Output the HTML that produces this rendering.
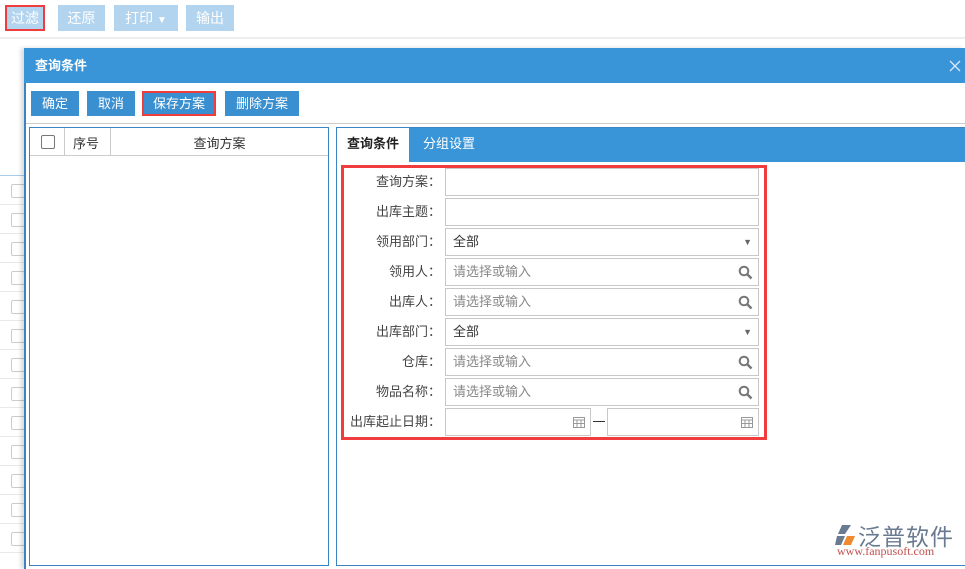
<!DOCTYPE html>
<html style="overflow:hidden;width:965px;height:569px"><head><meta charset="utf-8"><style>
*{box-sizing:border-box;margin:0;padding:0}
body{width:965px;height:569px;overflow:hidden;background:#fff;font-family:"Liberation Sans","Noto Sans CJK SC",sans-serif;font-size:13px;position:relative;color:#333}
.a{position:absolute}
.tb{position:absolute;top:5px;height:26px;background:#b3d4ee;color:#fff;font-size:14px;line-height:26px;text-align:center}
.bb{position:absolute;top:91px;height:25px;background:#3a8fd0;color:#fff;font-size:13px;line-height:25px;text-align:center}
.lab{position:absolute;left:336px;width:105px;text-align:right;color:#444;font-size:13px;height:28px;line-height:28px;white-space:nowrap}
.inp{position:absolute;left:445px;width:314px;height:28px;border:1px solid #c8c8c8;background:#fff;line-height:26px;padding-left:7px;font-size:13px;color:#333}
.ph{color:#888}
.ic{position:absolute;right:5px;top:6px}
</style></head><body>
<div class="tb" style="left:5px;width:40px;border:2px solid #f03c3c;line-height:22px">过滤</div>
<div class="tb" style="left:58px;width:47px">还原</div>
<div class="tb" style="left:114px;width:64px">打印 <span style="font-size:10px">▼</span></div>
<div class="tb" style="left:186px;width:48px">输出</div>
<div class="a" style="left:0;top:37px;width:965px;height:2px;background:#eee"></div>
<div class="a" style="left:0;top:175px;width:24px;height:1px;background:#a9cfee"></div>
<div id="bgrows"></div>
<script>
var s='';for(var i=0;i<13;i++){var y=184+i*29;s+='<div class="a" style="left:11px;top:'+y+'px;width:14px;height:14px;border:1px solid #ccc;border-radius:2px;background:#fff"></div><div class="a" style="left:0;top:'+(y+20)+'px;width:24px;height:1px;background:#e8e8e8"></div>';}
document.getElementById('bgrows').innerHTML=s;
</script>
<div class="a" style="left:24px;top:48px;width:941px;height:521px;background:#fff;border-left:2px solid #3a84c4;box-shadow:-3px 0 4px rgba(0,0,0,.15)"></div>
<div class="a" style="left:24px;top:48px;width:941px;height:35px;background:#3a95d8;color:#fff;font-weight:bold;font-size:13px;line-height:35px;padding-left:11px">查询条件</div>
<svg class="a" style="left:949px;top:60px" width="12" height="12" viewBox="0 0 12 12"><path d="M1 1l10 10M11 1L1 11" stroke="#dbe9f6" stroke-width="1.3"/></svg>
<div class="bb" style="left:31px;width:48px">确定</div>
<div class="bb" style="left:87px;width:48px">取消</div>
<div class="bb" style="left:142px;width:74px;border:2px solid #f03c3c;line-height:21px">保存方案</div>
<div class="bb" style="left:225px;width:74px">删除方案</div>
<div class="a" style="left:26px;top:123px;width:939px;height:1px;background:#ccc"></div>
<div class="a" style="left:29px;top:127px;width:300px;height:439px;border:1px solid #3a84c4"></div>
<div class="a" style="left:30px;top:128px;width:298px;height:28px;border-bottom:1px solid #ccc"></div>
<div class="a" style="left:41px;top:135px;width:14px;height:14px;border:1px solid #777;border-radius:2px"></div>
<div class="a" style="left:64px;top:128px;width:1px;height:28px;background:#ccc"></div>
<div class="a" style="left:110px;top:128px;width:1px;height:28px;background:#ccc"></div>
<div class="a" style="left:73px;top:133px;font-size:13px">序号</div>
<div class="a" style="left:111px;top:133px;width:217px;text-align:center;font-size:13px">查询方案</div>
<div class="a" style="left:336px;top:127px;width:629px;height:439px;border:1px solid #3a84c4;border-right:none"></div>
<div class="a" style="left:337px;top:128px;width:628px;height:34px;background:#3a95d8"></div>
<div class="a" style="left:337px;top:128px;width:72px;height:34px;background:#fff;font-weight:bold;line-height:32px;text-align:center;color:#222">查询条件</div>
<div class="a" style="left:423px;top:128px;line-height:32px;color:#fff;font-size:13px">分组设置</div>
<div class="a" style="left:341px;top:165px;width:426px;height:275px;border:3px solid #f03c3c"></div>
<div class="lab" style="top:168px">查询方案：</div><div class="inp" style="top:168px"></div>
<div class="lab" style="top:198px">出库主题：</div><div class="inp" style="top:198px"></div>
<div class="lab" style="top:228px">领用部门：</div><div class="inp" style="top:228px">全部<span class="a" style="right:6px;top:0;color:#666;font-size:9px">▼</span></div>
<div class="lab" style="top:258px">领用人：</div><div class="inp" style="top:258px"><span class="ph">请选择或输入</span><svg class="ic" width="15" height="15" viewBox="0 0 15 15"><circle cx="6" cy="6" r="4.3" fill="none" stroke="#777" stroke-width="2"/><path d="M9 9l4.5 4.5" stroke="#777" stroke-width="2.5"/></svg></div>
<div class="lab" style="top:288px">出库人：</div><div class="inp" style="top:288px"><span class="ph">请选择或输入</span><svg class="ic" width="15" height="15" viewBox="0 0 15 15"><circle cx="6" cy="6" r="4.3" fill="none" stroke="#777" stroke-width="2"/><path d="M9 9l4.5 4.5" stroke="#777" stroke-width="2.5"/></svg></div>
<div class="lab" style="top:318px">出库部门：</div><div class="inp" style="top:318px">全部<span class="a" style="right:6px;top:0;color:#666;font-size:9px">▼</span></div>
<div class="lab" style="top:348px">仓库：</div><div class="inp" style="top:348px"><span class="ph">请选择或输入</span><svg class="ic" width="15" height="15" viewBox="0 0 15 15"><circle cx="6" cy="6" r="4.3" fill="none" stroke="#777" stroke-width="2"/><path d="M9 9l4.5 4.5" stroke="#777" stroke-width="2.5"/></svg></div>
<div class="lab" style="top:378px">物品名称：</div><div class="inp" style="top:378px"><span class="ph">请选择或输入</span><svg class="ic" width="15" height="15" viewBox="0 0 15 15"><circle cx="6" cy="6" r="4.3" fill="none" stroke="#777" stroke-width="2"/><path d="M9 9l4.5 4.5" stroke="#777" stroke-width="2.5"/></svg></div>
<div class="lab" style="top:408px">出库起止日期：</div>
<div class="inp" style="top:408px;width:146px"><svg class="ic" style="top:7px" width="12" height="12" viewBox="0 0 12 12"><rect x="0.5" y="1.5" width="11" height="10" fill="none" stroke="#999"/><path d="M0 4h12M4 4v8M8 4v8M0 7.5h12" stroke="#999"/></svg></div>
<div class="a" style="left:593px;top:421px;width:12px;height:1px;background:#333"></div>
<div class="inp" style="top:408px;left:607px;width:152px"><svg class="ic" style="top:7px" width="12" height="12" viewBox="0 0 12 12"><rect x="0.5" y="1.5" width="11" height="10" fill="none" stroke="#999"/><path d="M0 4h12M4 4v8M8 4v8M0 7.5h12" stroke="#999"/></svg></div>
<svg class="a" style="left:834px;top:524px" width="22" height="22" viewBox="0 0 22 22"><path d="M8 1h9l-6 9H4z" fill="#6a7a90"/><path d="M3 12h8l-4 9H1z" fill="#6a7a90"/><path d="M13 12h8l-4 9h-8z" fill="#f08a30"/></svg>
<div class="a" style="left:858px;top:518px;font-size:23px;color:#6a7a90;letter-spacing:1px">泛普软件</div>
<div class="a" style="left:837px;top:544px;font-family:'Liberation Serif',serif;font-size:12px;color:#c0504d">www.fanpusoft.com</div>
</body></html>
